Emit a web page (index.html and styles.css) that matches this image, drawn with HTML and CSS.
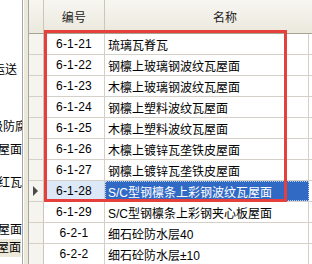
FILE: index.html
```html
<!DOCTYPE html>
<html lang="zh-CN">
<head>
    <meta charset="UTF-8">
    <title>定额列表</title>
    <link rel="stylesheet" href="styles.css">
</head>
<body>
    <div class="window">
        <!-- 左侧章节树 -->
        <div class="tree">
            <div class="tree-item first pad-end">运送</div>
            <div class="tree-item gap-a over-end">级防腐</div>
            <div class="tree-item gap-b">屋面</div>
            <div class="tree-item gap-c">红瓦</div>
            <div class="tree-item gap-d">屋面</div>
            <div class="tree-item current">屋面</div>
        </div>
        <div class="splitter"></div>

        <!-- 定额表格 -->
        <div class="grid">
            <div class="row head">
                <div class="cell rowhead"></div>
                <div class="cell code">编号</div>
                <div class="cell name center">名称</div>
            </div>
            <div class="row">
                <div class="cell rowhead"></div>
                <div class="cell code">6-1-21</div>
                <div class="cell name">琉璃瓦脊瓦</div>
            </div>
            <div class="row">
                <div class="cell rowhead"></div>
                <div class="cell code">6-1-22</div>
                <div class="cell name">钢檩上玻璃钢波纹瓦屋面</div>
            </div>
            <div class="row">
                <div class="cell rowhead"></div>
                <div class="cell code">6-1-23</div>
                <div class="cell name">木檩上玻璃钢波纹瓦屋面</div>
            </div>
            <div class="row">
                <div class="cell rowhead"></div>
                <div class="cell code">6-1-24</div>
                <div class="cell name">钢檩上塑料波纹瓦屋面</div>
            </div>
            <div class="row">
                <div class="cell rowhead"></div>
                <div class="cell code">6-1-25</div>
                <div class="cell name">木檩上塑料波纹瓦屋面</div>
            </div>
            <div class="row">
                <div class="cell rowhead"></div>
                <div class="cell code">6-1-26</div>
                <div class="cell name">木檩上镀锌瓦垄铁皮屋面</div>
            </div>
            <div class="row">
                <div class="cell rowhead"></div>
                <div class="cell code">6-1-27</div>
                <div class="cell name">钢檩上镀锌瓦垄铁皮屋面</div>
            </div>
            <div class="row selected">
                <div class="cell rowhead"><span class="pointer"></span></div>
                <div class="cell code">6-1-28</div>
                <div class="cell name">S/C型钢檩条上彩钢波纹瓦屋面</div>
            </div>
            <div class="row">
                <div class="cell rowhead"></div>
                <div class="cell code">6-1-29</div>
                <div class="cell name">S/C型钢檩条上彩钢夹心板屋面</div>
            </div>
            <div class="row">
                <div class="cell rowhead"></div>
                <div class="cell code">6-2-1</div>
                <div class="cell name">细石砼防水层40</div>
            </div>
            <div class="row">
                <div class="cell rowhead"></div>
                <div class="cell code">6-2-2</div>
                <div class="cell name">细石砼防水层±10</div>
            </div>

            <!-- 红色标注框 -->
            <div class="mark"></div>
        </div>
    </div>
</body>
</html>
```

FILE: styles.css
```css
* {
    margin: 0;
    padding: 0;
    box-sizing: border-box;
}

body {
    font-family: "Liberation Sans", "Noto Sans CJK SC", sans-serif;
    font-size: 12px;
    color: #000;
    background: #fff;
    width: 312px;
    height: 264px;
    overflow: hidden;
}

.window {
    display: flex;
    height: 264px;
}

/* 左侧树 */
.tree {
    width: 23px;
    flex: none;
    overflow: hidden;
    background: #fff;
    border-right: 1px solid #a7a6aa;
}

.tree-item {
    height: 18px;
    line-height: 18px;
    display: flex;
    justify-content: flex-end;
    white-space: nowrap;
}

.tree-item.first { margin-top: 61px; }
.tree-item.gap-a { margin-top: 39px; }
.tree-item.gap-b { margin-top: 5px; }
.tree-item.gap-c { margin-top: 15px; }
.tree-item.gap-d { margin-top: 29px; }

.tree-item.pad-end { padding-right: 5px; }
.tree-item.over-end { margin-right: -5px; }

.tree-item.current {
    background: #ece9d8;
    margin-right: 1px;
}

.splitter {
    width: 6px;
    flex: none;
    background: #ece9d8;
    border-left: 1px solid #fff;
    border-right: 1px solid #a7a6aa;
}

/* 表格 */
.grid {
    position: relative;
    flex: 1;
    overflow: hidden;
}

.row {
    display: flex;
    height: 21px;
    border-bottom: 1px solid #d4d0c8;
}

.row.head {
    height: 34px;
    background: linear-gradient(#f7f6f1, #ebe9dd);
    border-bottom: 1px solid #a5a391;
    color: #222;
}

.cell {
    flex: none;
    display: flex;
    align-items: center;
    white-space: nowrap;
    border-right: 1px solid #d4d0c8;
}

.cell.rowhead {
    width: 15px;
    background: #f5f4ee;
    border-right: 1px solid #c9c7ba;
}

.head .cell.rowhead {
    background: transparent;
}

.cell.code {
    width: 61px;
    justify-content: center;
    letter-spacing: 0.2px;
}

.cell.name {
    width: 204px;
    padding-left: 3px;
}

.cell.center {
    justify-content: center;
    padding-left: 0;
    width: 240px;
    border-right: none;
}

.head .cell {
    border-right-color: #c9c7ba;
}

.row.selected .code {
    background: #dce7f7;
}

.row.selected .name {
    background: #316ac5;
    color: #fff;
    border: 1px dotted #bcd0f0;
    padding-left: 2px;
}

.pointer {
    width: 0;
    height: 0;
    margin-left: 4px;
    border-top: 5px solid transparent;
    border-bottom: 5px solid transparent;
    border-left: 5px solid #4a4a4a;
}

.mark {
    position: absolute;
    left: 15px;
    top: 30px;
    width: 243px;
    height: 172px;
    border: 3px solid #e5403b;
    pointer-events: none;
}
```
